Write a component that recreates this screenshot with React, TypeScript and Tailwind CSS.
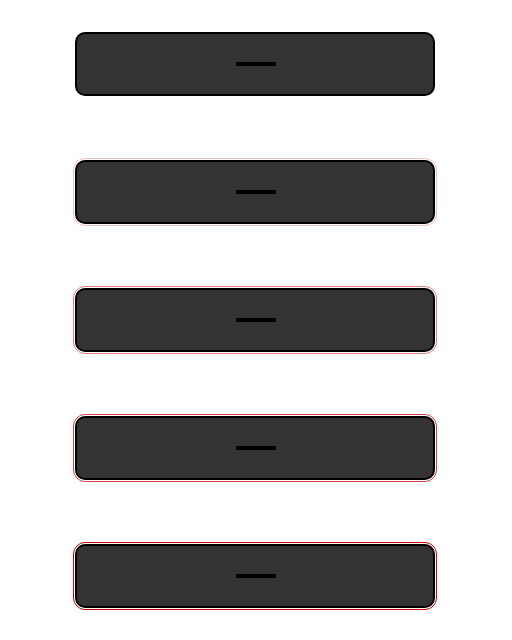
const rings = [
  "",
  "outline outline-1 outline-offset-1 outline-[#cc0000]/25",
  "outline outline-1 outline-offset-1 outline-[#cc0000]/50",
  "outline outline-1 outline-offset-1 outline-[#cc0000]/75",
  "outline outline-1 outline-offset-1 outline-[#cc0000]",
];

export default function App() {
  return (
    <div className="flex min-h-[640px] w-[512px] flex-col items-center gap-16 bg-white pt-8 pr-0.5">
      {rings.map((ring, i) => (
        <button
          key={i}
          className={`flex h-16 w-[360px] items-center justify-center rounded-[10px] border-2 border-black bg-[#333333] ${ring}`}
        >
          <span className="ml-0.5 block h-1 w-10 bg-black" />
        </button>
      ))}
    </div>
  );
}
